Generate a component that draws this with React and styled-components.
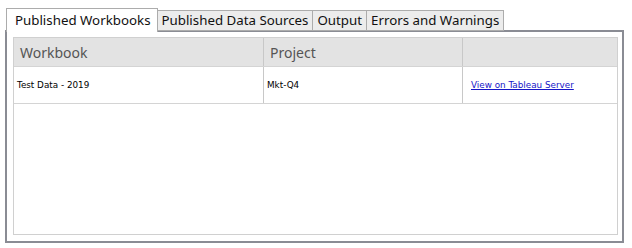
import React from "react";
import styled, { createGlobalStyle } from "styled-components";

const Global = createGlobalStyle`
  html, body { margin: 0; padding: 0; background: #fff; }
  body { font-family: "Noto Sans", "Open Sans", sans-serif; }
`;

const Page = styled.div`
  width: 632px;
  height: 248px;
  box-sizing: border-box;
  padding: 7px 0 0 5px;
`;

const TabStrip = styled.div`
  display: flex;
  align-items: flex-end;
  height: 24px;
  position: relative;
  z-index: 1;
  padding-left: 1px;
`;

const Tab = styled.div`
  box-sizing: border-box;
  height: ${(p) => (p.$active ? "24px" : "21px")};
  margin-bottom: ${(p) => (p.$active ? "-1px" : "0")};
  padding: ${(p) => (p.$active ? "0 6px 0 8px" : "0 4px")};
  display: flex;
  align-items: center;
  border: 1px solid #acacac;
  border-bottom: ${(p) => (p.$active ? "none" : "1px solid #acacac")};
  margin-left: ${(p) => (p.$first ? "0" : "-1px")};
  background: ${(p) => (p.$active ? "#ffffff" : "#ececec")};
  font-family: "Noto Sans", "Open Sans", sans-serif;
  font-size: 13.3px;
  color: #111;
  white-space: nowrap;
  line-height: 1;
`;

const Panel = styled.div`
  box-sizing: border-box;
  width: 619px;
  height: 213px;
  border: 2px solid #8a8c94;
  margin-top: -1px;
  padding: 5px 4px 6px 6px;
  background: #fff;
`;

const Grid = styled.div`
  box-sizing: border-box;
  height: 100%;
  border: 1px solid #d0d0d0;
`;

const Row = styled.div`
  display: grid;
  grid-template-columns: 249px 199px 1fr;
  height: ${(p) => p.$h}px;
  background: ${(p) => (p.$header ? "#e3e3e3" : "#fff")};
  border-bottom: 1px solid #d4d4d4;
  box-sizing: border-box;
`;

const Cell = styled.div`
  display: flex;
  align-items: center;
  padding-left: ${(p) => (p.$header ? "6px" : "3px")};
  border-left: ${(p) => (p.$first ? "none" : "1px solid #c8c8c8")};
  font-family: ${(p) =>
    p.$header ? '"Noto Sans", "Open Sans", sans-serif' : '"DejaVu Sans", "Liberation Sans", sans-serif'};
  font-size: ${(p) => (p.$header ? "14px" : "8.8px")};
  color: ${(p) => (p.$header ? "#555" : "#000")};
  white-space: nowrap;
`;

const Link = styled.a`
  color: #1616c8;
  text-decoration: underline;
  margin-left: 5px;
  cursor: pointer;
`;

export default function App() {
  const tabs = ["Published Workbooks", "Published Data Sources", "Output", "Errors and Warnings"];
  return (
    <>
      <Global />
      <Page>
        <TabStrip>
          {tabs.map((t, i) => (
            <Tab key={t} $active={i === 0} $first={i === 0}>
              {t}
            </Tab>
          ))}
        </TabStrip>
        <Panel>
          <Grid>
            <Row $header $h={29}>
              <Cell $header $first>Workbook</Cell>
              <Cell $header>Project</Cell>
              <Cell $header></Cell>
            </Row>
            <Row $h={37}>
              <Cell $first>Test Data - 2019</Cell>
              <Cell>Mkt-Q4</Cell>
              <Cell>
                <Link>View on Tableau Server</Link>
              </Cell>
            </Row>
          </Grid>
        </Panel>
      </Page>
    </>
  );
}
